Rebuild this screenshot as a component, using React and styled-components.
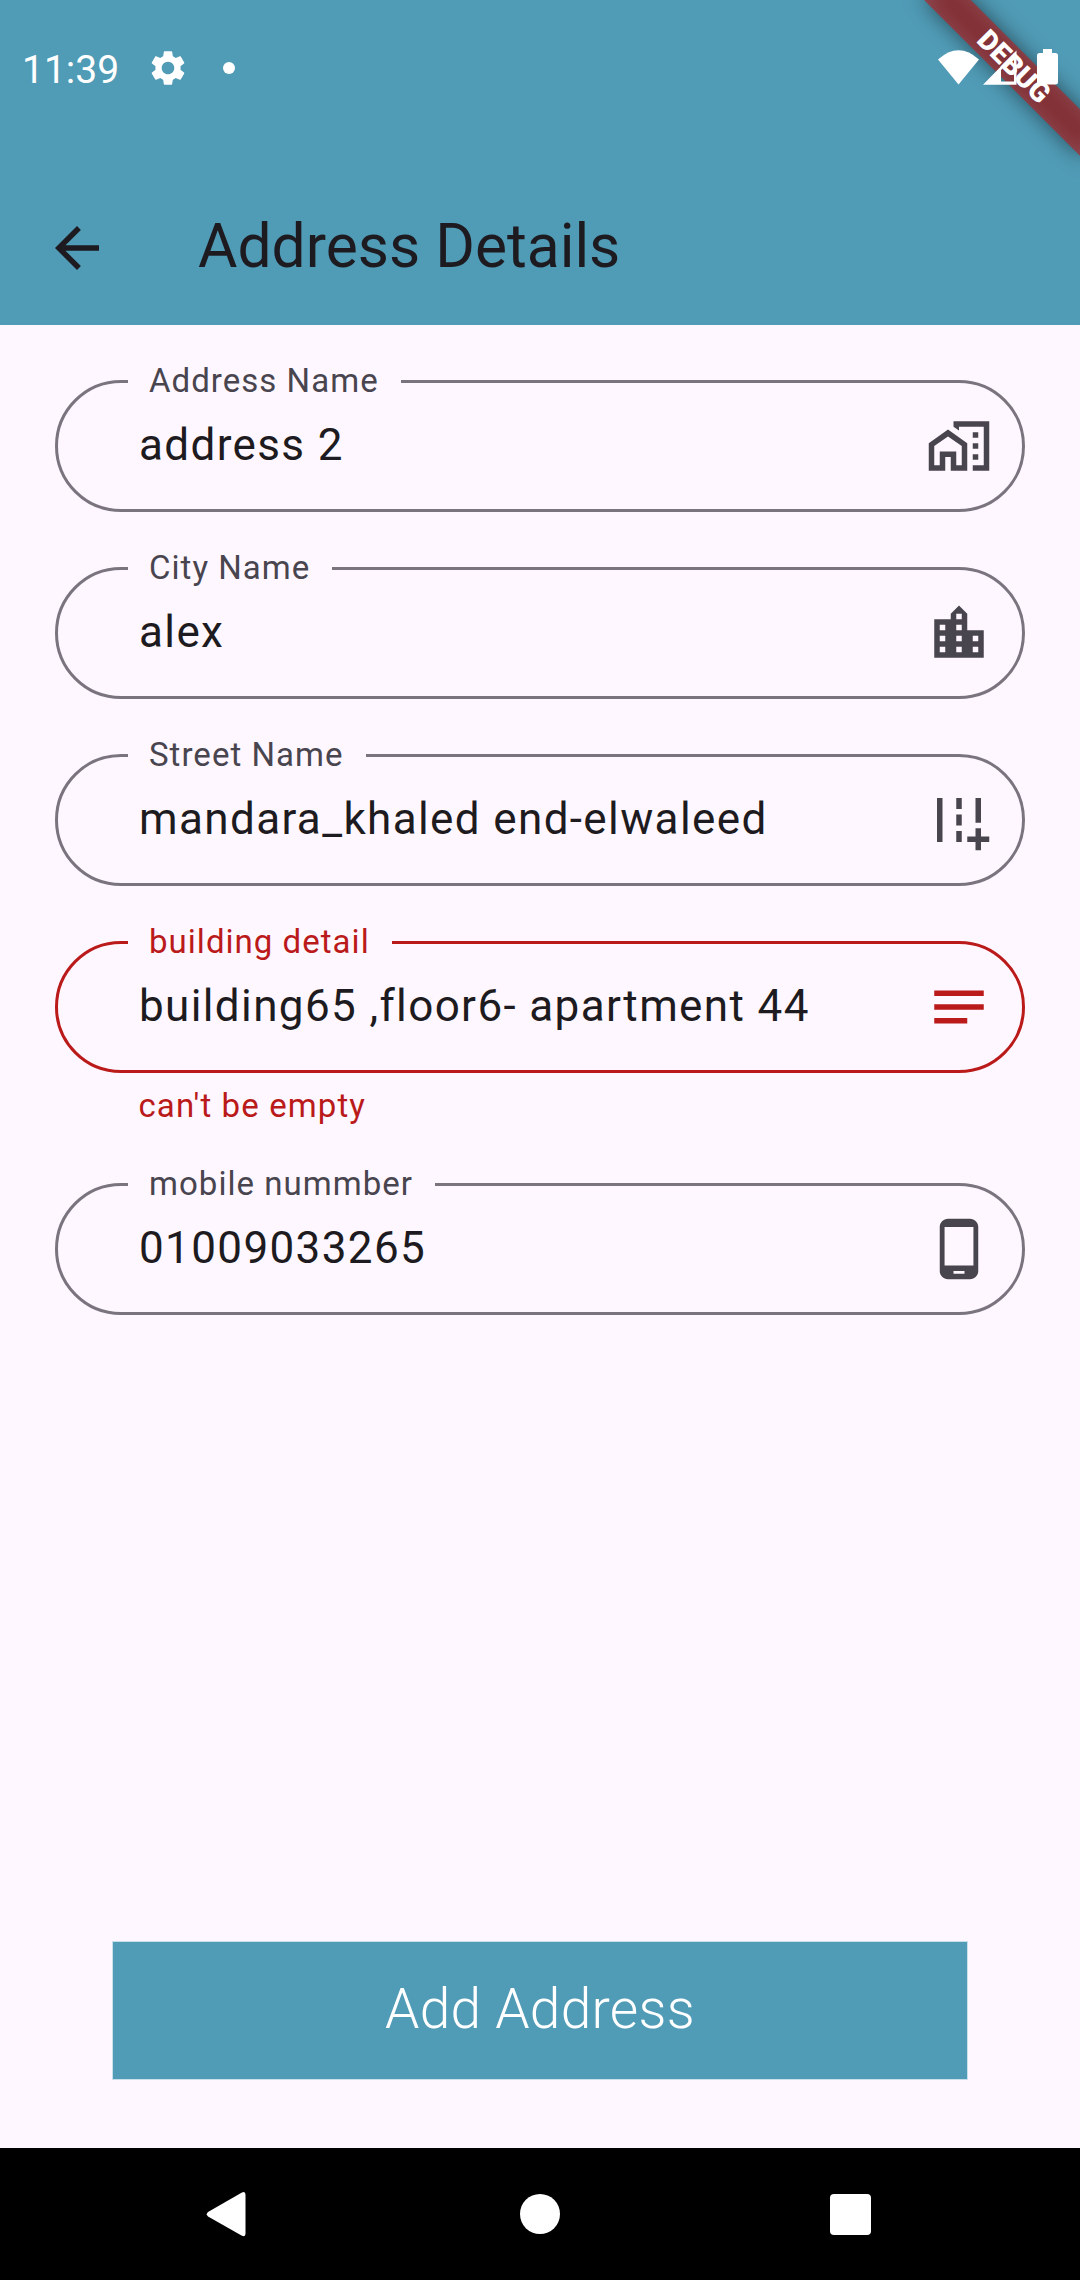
import React from "react";
import styled, { createGlobalStyle } from "styled-components";

const color = {
  primary: "#509bb6",
  surface: "#fef7ff",
  ink: "#1d1b20",
  muted: "#49454f",
  outline: "#79747e",
  error: "#ba1a1a",
};

const GlobalStyle = createGlobalStyle`
  *, *::before, *::after { box-sizing: border-box; }
  html, body { margin: 0; padding: 0; }
  body {
    background: ${color.surface};
    font-family: Roboto, "Noto Sans", sans-serif;
  }
`;

const Screen = styled.div`
  position: relative;
  display: flex;
  flex-direction: column;
  width: 1080px;
  height: 2280px;
  overflow: hidden;
  background: ${color.surface};
  color: ${color.ink};
`;

const Header = styled.header`
  display: flex;
  flex-direction: column;
  height: 325px;
  background: ${color.primary};
`;

const StatusBar = styled.div`
  position: relative;
  z-index: 2;
  display: flex;
  align-items: center;
  height: 135px;
  padding: 0 20px 0 22px;
  color: #fff;
`;

const Clock = styled.span`
  width: 125px;
  padding-top: 4px;
  font-size: 39px;
  line-height: 46px;
`;

const SystemIcons = styled.div`
  display: flex;
  margin: 0 0 2px auto;
`;

const Glyph = styled.svg`
  display: block;
  flex: none;
  width: ${(p) => p.$w}px;
  height: ${(p) => p.$h || p.$w}px;
  fill: currentColor;
`;

const NoticeDot = styled.span`
  width: 12px;
  height: 12px;
  margin-left: 34px;
  border-radius: 50%;
  background: #fff;
`;

const AppBar = styled.div`
  display: flex;
  align-items: center;
  height: 154px;
  margin-top: auto;
  padding-left: 44px;
`;

const BackButton = styled.button`
  display: flex;
  width: 154px;
  padding: 0;
  border: 0;
  background: none;
  color: ${color.ink};
`;

const Title = styled.h1`
  margin: 0 0 3px;
  font-size: 60.5px;
  font-weight: 400;
  line-height: 77px;
`;

const BannerClip = styled.div`
  position: absolute;
  top: 0;
  right: 0;
  z-index: 1;
  width: 260px;
  height: 260px;
  overflow: hidden;
`;

const Banner = styled.div`
  position: absolute;
  top: 49.6px;
  left: 83.9px;
  width: 220px;
  height: 33px;
  transform: rotate(45deg);
  color: #fff;
  font-size: 28px;
  font-weight: 900;
  line-height: 33px;
  text-align: center;

  &::before {
    content: "";
    position: absolute;
    inset: 0;
    background: rgba(0, 0, 0, 0.5);
    filter: blur(10.9px);
  }
`;

const BannerLabel = styled.span`
  position: absolute;
  inset: 0;
  background: rgba(183, 28, 28, 0.627);
`;

const Form = styled.form`
  display: flex;
  flex: 1;
  flex-direction: column;
  gap: 55px;
  padding: 55px 55px 0;
`;

const FieldGroup = styled.div`
  display: flex;
  flex-direction: column;
`;

const Outline = styled.fieldset`
  height: 132px;
  min-width: 0;
  margin: 0;
  padding: 0;
  border: 3px solid ${(p) => (p.$error ? color.error : color.outline)};
  border-radius: 66px;
`;

const Label = styled.legend`
  height: 3px;
  margin-left: 70px;
  padding: 0 22px 0 21px;
  color: ${(p) => (p.$error ? color.error : color.muted)};
  font-size: 33px;
  letter-spacing: 1.03px;
  line-height: 1px;
  white-space: nowrap;
`;

const Row = styled.div`
  display: flex;
  align-items: center;
  height: 126px;
  padding: 0 30px 0 81px;
  color: ${(p) => (p.$error ? color.error : color.muted)};
`;

const Value = styled.span`
  flex: 1;
  margin-bottom: 2px;
  color: ${color.ink};
  font-size: 44px;
  letter-spacing: 1.375px;
  line-height: 66px;
  white-space: nowrap;
`;

const ErrorText = styled.p`
  height: 55px;
  margin: 0;
  padding: 11px 0 0 83.5px;
  color: ${color.error};
  font-size: 33px;
  letter-spacing: 1.1px;
  line-height: 44px;
`;

const SubmitButton = styled.button`
  align-self: center;
  width: 854px;
  height: 137px;
  margin: auto 0 69px;
  padding: 0 0 4px;
  border: 0;
  background: ${color.primary};
  box-shadow: 0 0 0 1px #c9dfeb;
  color: #fff;
  font-family: inherit;
  font-size: 55px;
  font-weight: 300;
  letter-spacing: 0.3px;
`;

const NavBar = styled.nav`
  display: grid;
  grid-template-columns: repeat(3, 310.5px);
  justify-content: center;
  align-items: center;
  justify-items: center;
  height: 132px;
  background: #000;
  color: #fff;
`;

const ICONS = {
  homeWork:
    "M1 11v10h6v-5h2v5h6V11L8 6l-7 5zm12 8h-2v-5H5v5H3v-7l5-3.5 5 3.5v7zM17 7h2v2h-2zM17 11h2v2h-2zM17 15h2v2h-2zM10 3v1.97l2 1.43V5h9v14h-4v2h6V3z",
  city: "M15 11V5l-3-3-3 3v2H3v14h18V11h-6zm-8 8H5v-2h2v2zm0-4H5v-2h2v2zm0-4H5V9h2v2zm6 8h-2v-2h2v2zm0-4h-2v-2h2v2zm0-4h-2V9h2v2zm0-4h-2V5h2v2zm6 12h-2v-2h2v2zm0-4h-2v-2h2v2z",
  addRoad:
    "M20 18v-3h-2v3h-3v2h3v3h2v-3h3v-2zM18 4h2v9h-2zM4 4h2v16H4zM11 4h2v4h-2zM11 10h2v4h-2zM11 16h2v4h-2z",
  notes: "M21 11H3v2h18zM3 16h12v2H3zM21 6H3v2h18z",
  phone:
    "M16 1H8C6.34 1 5 2.34 5 4v16c0 1.66 1.34 3 3 3h8c1.66 0 3-1.34 3-3V4c0-1.66-1.34-3-3-3zm-2 20h-4v-1h4v1zm3.25-3H6.75V4h10.5v14z",
  back: "M20 11H7.83l5.59-5.59L12 4l-8 8 8 8 1.41-1.41L7.83 13H20v-2z",
  settings:
    "M19.14 12.94c.04-.3.06-.61.06-.94 0-.32-.02-.64-.07-.94l2.03-1.58c.18-.14.23-.41.12-.61l-1.92-3.32c-.12-.22-.37-.29-.59-.22l-2.39.96c-.5-.38-1.03-.7-1.62-.94l-.36-2.54c-.04-.24-.24-.41-.48-.41h-3.84c-.24 0-.43.17-.47.41l-.36 2.54c-.59.24-1.13.57-1.62.94l-2.39-.96c-.22-.08-.47 0-.59.22L2.74 8.87c-.12.21-.08.47.12.61l2.03 1.58c-.05.3-.09.63-.09.94s.02.64.07.94l-2.03 1.58c-.18.14-.23.41-.12.61l1.92 3.32c.12.22.37.29.59.22l2.39-.96c.5.38 1.03.7 1.62.94l.36 2.54c.05.24.24.41.48.41h3.84c.24 0 .44-.17.47-.41l.36-2.54c.59-.24 1.13-.56 1.62-.94l2.39.96c.22.08.47 0 .59-.22l1.92-3.32c.12-.22.07-.47-.12-.61l-2.01-1.58zM12 15.6c-1.98 0-3.6-1.62-3.6-3.6s1.62-3.6 3.6-3.6 3.6 1.62 3.6 3.6-1.62 3.6-3.6 3.6z",
};

const FIELDS = [
  { label: "Address Name", value: "address 2", icon: "homeWork" },
  { label: "City Name", value: "alex", icon: "city" },
  { label: "Street Name", value: "mandara_khaled end-elwaleed", icon: "addRoad" },
  {
    label: "building detail",
    value: "building65 ,floor6- apartment 44",
    icon: "notes",
    error: "can't be empty",
  },
  { label: "mobile nummber", value: "01009033265", icon: "phone" },
];

function Icon({ name, size }) {
  return (
    <Glyph $w={size} viewBox="0 0 24 24" aria-hidden="true">
      <path d={ICONS[name]} />
    </Glyph>
  );
}

function Field({ label, value, icon, error }) {
  const invalid = Boolean(error);
  return (
    <FieldGroup>
      <Outline $error={invalid}>
        <Label $error={invalid}>{label}</Label>
        <Row $error={invalid}>
          <Value>{value}</Value>
          <Icon name={icon} size={66} />
        </Row>
      </Outline>
      {error && <ErrorText>{error}</ErrorText>}
    </FieldGroup>
  );
}

export default function App() {
  return (
    <Screen>
      <GlobalStyle />
      <Header>
        <StatusBar>
          <Clock>11:39</Clock>
          <Icon name="settings" size={42} />
          <NoticeDot />
          <SystemIcons>
            <Glyph $w={125} $h={40} viewBox="935 47 125 40" aria-hidden="true">
              <path d="M938 59.5Q958.500 41 979 59.500L958.500 84.500Z" />
              <path
                fillRule="evenodd"
                d="M983 84.700L1016.500 50.500V84.700ZM1001 70V81.500H1014V57Z"
              />
              <path d="M1043 49h9v4h3.500q2.500 0 2.500 2.500v26.500q0 2.500-2.500 2.500h-16q-2.500 0-2.500-2.500v-26.500q0-2.500 2.500-2.500h3.500z" />
            </Glyph>
          </SystemIcons>
        </StatusBar>
        <AppBar>
          <BackButton type="button" aria-label="Back">
            <Icon name="back" size={66} />
          </BackButton>
          <Title>Address Details</Title>
        </AppBar>
      </Header>
      <BannerClip>
        <Banner>
          <BannerLabel>DEBUG</BannerLabel>
        </Banner>
      </BannerClip>
      <Form>
        {FIELDS.map((field) => (
          <Field key={field.label} {...field} />
        ))}
        <SubmitButton type="button">Add Address</SubmitButton>
      </Form>
      <NavBar>
        <Glyph $w={50} $h={46} viewBox="204.500 2191 50 46" aria-hidden="true">
          <path d="M207.500 2212L241 2192.700Q245 2190.700 245 2194.700V2233.500Q245 2237.500 241 2235.500L207.500 2216.500Q205 2214.300 207.500 2212Z" />
        </Glyph>
        <Glyph $w={40} viewBox="0 0 40 40" aria-hidden="true">
          <circle cx="20" cy="20" r="20" />
        </Glyph>
        <Glyph $w={41} viewBox="0 0 41 41" aria-hidden="true">
          <rect width="41" height="41" rx="4" />
        </Glyph>
      </NavBar>
    </Screen>
  );
}
